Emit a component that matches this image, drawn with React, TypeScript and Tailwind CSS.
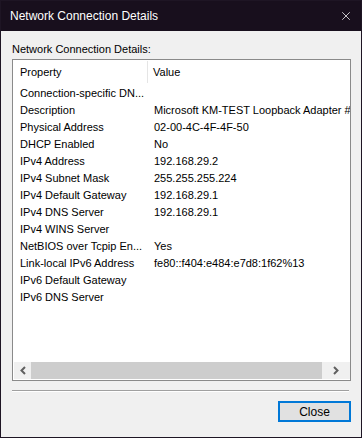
import { X } from "lucide-react";

const ROWS: [string, string][] = [
  ["Connection-specific DN...", ""],
  ["Description", "Microsoft KM-TEST Loopback Adapter #2"],
  ["Physical Address", "02-00-4C-4F-4F-50"],
  ["DHCP Enabled", "No"],
  ["IPv4 Address", "192.168.29.2"],
  ["IPv4 Subnet Mask", "255.255.255.224"],
  ["IPv4 Default Gateway", "192.168.29.1"],
  ["IPv4 DNS Server", "192.168.29.1"],
  ["IPv4 WINS Server", ""],
  ["NetBIOS over Tcpip En...", "Yes"],
  ["Link-local IPv6 Address", "fe80::f404:e484:e7d8:1f62%13"],
  ["IPv6 Default Gateway", ""],
  ["IPv6 DNS Server", ""],
];

export default function App() {
  return (
    <div className="w-[362px] h-[438px] flex flex-col bg-[#f0f0f0] border border-[#1e1524] font-['Liberation_Sans',Arial,sans-serif] text-black">
      {/* Title bar */}
      <div className="h-[30px] shrink-0 bg-[#180f1d] flex items-center justify-between pl-[9px] pr-[8px]">
        <span className="text-white text-[12px]">Network Connection Details</span>
        <X className="w-[14px] h-[14px] text-white" strokeWidth={1.3} />
      </div>

      <div className="flex-1 flex flex-col px-[11px]">
        <div className="mt-[12px] text-[11px] leading-[13px] h-[16px]">Network Connection Details:</div>

        {/* List view */}
        <div className="w-[339px] h-[322px] bg-white border border-[#8a8a8a] flex flex-col overflow-hidden">
          <div className="h-[24px] flex shrink-0 text-[11px]">
            <div className="w-[135px] pl-[7px] flex items-center border-r border-[#e5e5e5] my-[1px]">Property</div>
            <div className="flex-1 pl-[5px] flex items-center">Value</div>
          </div>
          <div className="flex-1 text-[11px] leading-[17px] pt-[1px]">
            {ROWS.map(([k, v]) => (
              <div key={k} className="flex h-[17px] whitespace-nowrap">
                <div className="w-[136px] pl-[7px] overflow-hidden">{k}</div>
                <div className="flex-1 pl-[5px] overflow-hidden">{v}</div>
              </div>
            ))}
          </div>
          {/* Horizontal scrollbar */}
          <div className="h-[17px] mb-[1px] ml-[1px] flex bg-[#f0f0f0] shrink-0">
            <div className="w-[17px] flex items-center justify-center">
              <svg width="6" height="9" viewBox="0 0 6 9">
                <polyline points="5,1 1.5,4.5 5,8" fill="none" stroke="#606060" strokeWidth="2" />
              </svg>
            </div>
            <div className="w-[291px] bg-[#cdcdcd]" />
            <div className="flex-1 flex items-center justify-center">
              <svg width="6" height="9" viewBox="0 0 6 9">
                <polyline points="1,1 4.5,4.5 1,8" fill="none" stroke="#606060" strokeWidth="2" />
              </svg>
            </div>
          </div>
        </div>

        {/* Separator */}
        <div className="mt-[9px] w-[337px] border-t border-[#a0a0a0] border-b border-b-white" />

        <div className="mt-[9px] flex justify-end -mr-[1px]">
          <button className="w-[73px] h-[21px] bg-[#e1e1e1] border-2 border-[#0078d7] text-[12px] leading-none flex items-center justify-center">
            Close
          </button>
        </div>
      </div>
    </div>
  );
}
